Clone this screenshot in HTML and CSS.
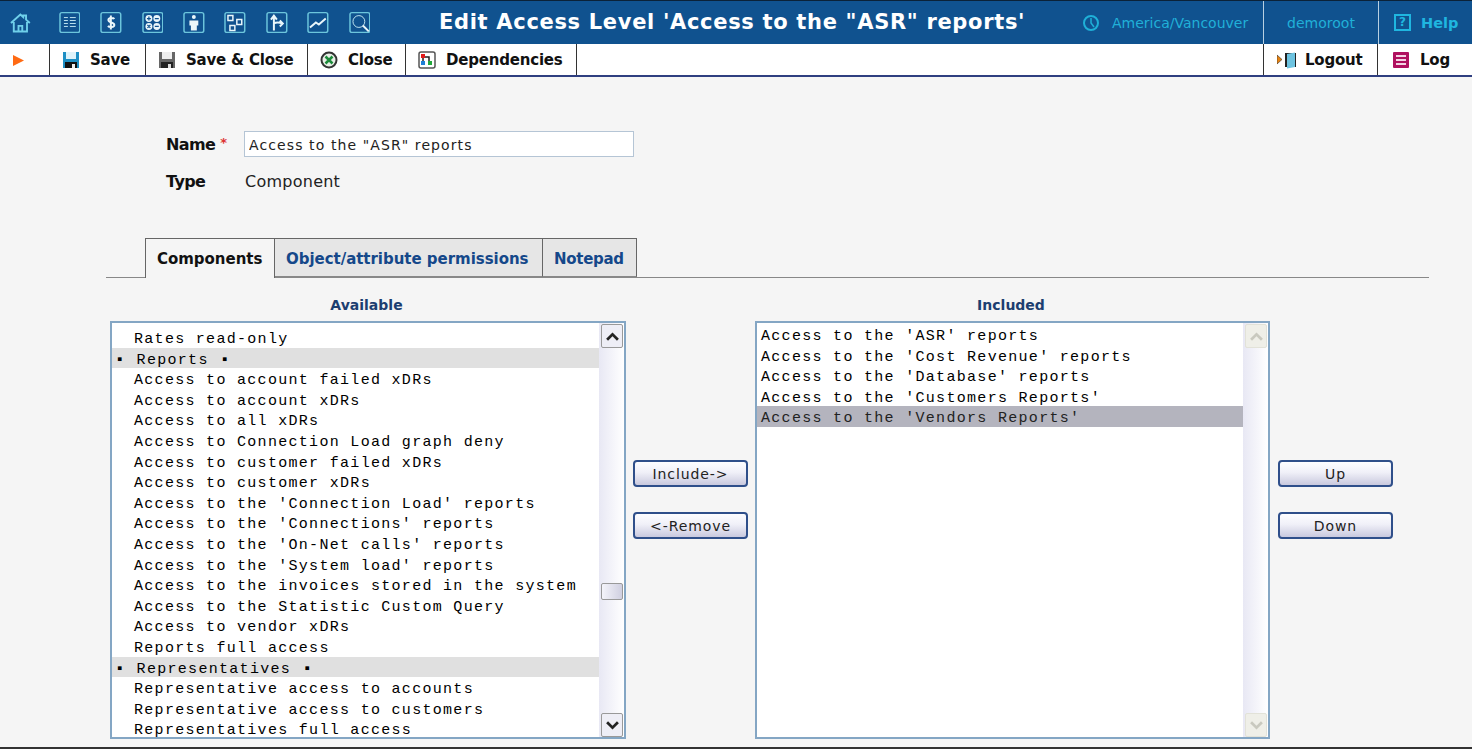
FILE: index.html
```html
<!DOCTYPE html>
<html lang="en">
<head>
<meta charset="utf-8">
<title>Edit Access Level</title>
<link rel="stylesheet" href="styles.css">
</head>
<body>
<div class="page">
<header class="topbar">
  <nav class="nav-icons">
    <svg class="home" viewBox="0 0 22 22"><path d="M1 11 11 2l3 2.700V3h3v4.400l4 3.600M4 10v10h14V10M9 20v-6h4v6" fill="none" stroke="#6fd0ea" stroke-width="2"/></svg>
    <svg class="nav" viewBox="0 0 22 22"><rect x="1" y="1" width="20" height="20" rx="2"/><path d="M5 6h4M5 9h4M5 12h4M5 15h4M11 6h6M11 9h6M11 12h6M11 15h6" class="thin"/></svg>
    <svg class="nav" viewBox="0 0 22 22"><rect x="1" y="1" width="20" height="20" rx="2"/><path d="M14.500 7.500c-1-1.500-6-1.500-6 1 0 3 6 2 6 5 0 2.500-5 2.500-6.500 1M11 4v14" class="white"/></svg>
    <svg class="nav" viewBox="0 0 22 22"><rect x="1" y="1" width="20" height="20" rx="2"/><circle cx="7" cy="7" r="3.500" class="fill"/><circle cx="15" cy="7" r="3.500" class="fill"/><circle cx="7" cy="15" r="3.500" class="fill"/><circle cx="15" cy="15" r="3.500" class="fill"/><path d="M5 7h4M7 5v4M13 7h4M5.500 13.500l3 3M8.500 13.500l-3 3M13 15h4" class="mark"/></svg>
    <svg class="nav" viewBox="0 0 22 22"><rect x="1" y="1" width="20" height="20" rx="2"/><circle cx="11" cy="5.500" r="2" class="fill"/><path d="M6.500 9h9v5H14v5H8v-5H6.500z" class="fill"/></svg>
    <svg class="nav" viewBox="0 0 22 22"><rect x="1" y="1" width="20" height="20" rx="2"/><path d="M4 4h5v5H4zM13 8h5v5h-5zM6 14h5v5H6z" class="white-thin"/></svg>
    <svg class="nav" viewBox="0 0 22 22"><rect x="1" y="1" width="20" height="20" rx="2"/><path d="M8 19V5M5 8l3-4 3 4M8 12c3-2 6-1 9 0M14 9l3 3-3 3" class="white"/></svg>
    <svg class="nav" viewBox="0 0 22 22"><rect x="1" y="1" width="20" height="20" rx="2"/><path d="M3 16l6-5 3 2 7-6" class="white"/></svg>
    <svg class="nav" viewBox="0 0 22 22"><rect x="1" y="1" width="20" height="20" rx="2"/><circle cx="10" cy="10" r="6" class="thin"/><path d="M14 14l6 6" class="white"/></svg>
  </nav>
  <h1 class="title">Edit Access Level 'Access to the "ASR" reports'</h1>
  <div class="zone">
    <svg class="clock" viewBox="0 0 18 18"><circle cx="9" cy="9" r="7" fill="none" stroke="#1fb0d8" stroke-width="2"/><path d="M9 4v5l3 4" fill="none" stroke="#1fb0d8" stroke-width="1.500"/></svg>
    <span>America/Vancouver</span>
  </div>
  <div class="user">demoroot</div>
  <div class="help">
    <span class="help-box">?</span>
    <span class="help-text">Help</span>
  </div>
</header>

<div class="toolbar">
  <div class="tool arrow-cell"><svg class="arrow" viewBox="0 0 11 11"><path d="M0 0l11 5.500L0 11z" fill="#ff6a13"/></svg></div>
  <div class="tool t-save">
    <svg class="ticon" viewBox="0 0 18 18"><path d="M1 1h16v16H1z" fill="#1e8fc4"/><path d="M4 1h10v7H4z" fill="#dff3fa"/><path d="M3 11h12v6H3z" fill="#111"/><path d="M10 13h3v4h-3z" fill="#eee"/></svg>
    <span>Save</span>
  </div>
  <div class="tool t-saveclose">
    <svg class="ticon" viewBox="0 0 18 18"><path d="M1 1h16v16H1z" fill="#666"/><path d="M4 1h10v7H4z" fill="#eee"/><path d="M3 11h12v6H3z" fill="#222"/><path d="M10 13h3v4h-3z" fill="#ddd"/></svg>
    <span>Save &amp; Close</span>
  </div>
  <div class="tool t-close">
    <svg class="ticon" viewBox="0 0 18 18"><circle cx="9" cy="9" r="7.500" fill="#e8efe6" stroke="#333" stroke-width="2"/><path d="M5.500 5.500l7 7M12.500 5.500l-7 7" stroke="#1c8a3a" stroke-width="2.500"/></svg>
    <span>Close</span>
  </div>
  <div class="tool t-dep">
    <svg class="ticon" viewBox="0 0 18 18"><rect x="1" y="1" width="16" height="16" rx="2" fill="#fff" stroke="#555" stroke-width="1.500"/><path d="M5 6v7M5 6h6v6" fill="none" stroke="#222" stroke-width="1.500"/><rect x="3" y="3" width="4" height="4" fill="#e21b1b"/><rect x="3" y="10" width="4" height="4" fill="#1f7fd6"/><rect x="10" y="10" width="4" height="4" fill="#22a83c"/></svg>
    <span>Dependencies</span>
  </div>
  <div class="tool-spacer"></div>
  <div class="tool t-logout">
    <svg class="ticon" viewBox="0 0 22 18"><path d="M0 4l5 4.500L0 13z" fill="#e8820e" stroke="#333" stroke-width=".6"/><path d="M8 2h11v14H8z" fill="#222"/><path d="M10 3l8-1.500V16l-8 1.500z" fill="#6dc3e0"/></svg>
    <span>Logout</span>
  </div>
  <div class="tool t-log">
    <svg class="ticon" viewBox="0 0 18 18"><rect x="1" y="1" width="16" height="16" rx="1" fill="#b0105f"/><path d="M4 5h10M4 9h10M4 13h10" stroke="#f4d3e3" stroke-width="2"/></svg>
    <span>Log</span>
  </div>
</div>
<div class="toolbar-rule"></div>

<main class="main">
  <div class="form">
    <label class="f-label">Name <span class="req">*</span></label>
    <input class="f-input" type="text" value="Access to the &quot;ASR&quot; reports">
    <div class="f-label">Type</div>
    <div class="f-value">Component</div>
  </div>

  <div class="tabs">
    <div class="tab active">Components</div>
    <div class="tab">Object/attribute permissions</div>
    <div class="tab">Notepad</div>
  </div>

  <div class="picker">
    <div class="heading">Available</div>
    <div></div>
    <div class="heading">Included</div>
    <div></div>

    <div class="listbox">
      <div class="items avail">
        <div class="item">Rates read-only</div>
        <div class="item group">&#9642; Reports &#9642;</div>
        <div class="item">Access to account failed xDRs</div>
        <div class="item">Access to account xDRs</div>
        <div class="item">Access to all xDRs</div>
        <div class="item">Access to Connection Load graph deny</div>
        <div class="item">Access to customer failed xDRs</div>
        <div class="item">Access to customer xDRs</div>
        <div class="item">Access to the 'Connection Load' reports</div>
        <div class="item">Access to the 'Connections' reports</div>
        <div class="item">Access to the 'On-Net calls' reports</div>
        <div class="item">Access to the 'System load' reports</div>
        <div class="item">Access to the invoices stored in the system</div>
        <div class="item">Access to the Statistic Custom Query</div>
        <div class="item">Access to vendor xDRs</div>
        <div class="item">Reports full access</div>
        <div class="item group">&#9642; Representatives &#9642;</div>
        <div class="item">Representative access to accounts</div>
        <div class="item">Representative access to customers</div>
        <div class="item">Representatives full access</div>
      </div>
      <div class="scrollbar">
        <div class="sb-btn"><svg viewBox="0 0 12 8"><path d="M1 7l5-5 5 5" fill="none" stroke="#222" stroke-width="2.500"/></svg></div>
        <div class="sb-track"><div class="sb-thumb"></div></div>
        <div class="sb-btn"><svg viewBox="0 0 12 8"><path d="M1 1l5 5 5-5" fill="none" stroke="#222" stroke-width="2.500"/></svg></div>
      </div>
    </div>

    <div class="btn-col">
      <button class="btn">Include-&gt;</button>
      <button class="btn">&lt;-Remove</button>
    </div>

    <div class="listbox">
      <div class="items incl">
        <div class="item">Access to the 'ASR' reports</div>
        <div class="item">Access to the 'Cost Revenue' reports</div>
        <div class="item">Access to the 'Database' reports</div>
        <div class="item">Access to the 'Customers Reports'</div>
        <div class="item selected">Access to the 'Vendors Reports'</div>
      </div>
      <div class="scrollbar disabled">
        <div class="sb-btn"><svg viewBox="0 0 12 8"><path d="M1 7l5-5 5 5" fill="none" stroke="#c9c9bf" stroke-width="2.500"/></svg></div>
        <div class="sb-track"></div>
        <div class="sb-btn"><svg viewBox="0 0 12 8"><path d="M1 1l5 5 5-5" fill="none" stroke="#c9c9bf" stroke-width="2.500"/></svg></div>
      </div>
    </div>

    <div class="btn-col last">
      <button class="btn">Up</button>
      <button class="btn">Down</button>
    </div>
  </div>
</main>
<div class="bottom-rule"></div>
</div>
</body>
</html>
```

FILE: styles.css
```css
* { box-sizing: border-box; }
html, body { margin: 0; padding: 0; height: 100%; overflow: hidden; }
body { font-family: "DejaVu Sans", sans-serif; background: #f5f5f5; color: #111; }
.page { height: 749px; display: flex; flex-direction: column; }

.topbar {
  height: 44px; flex: none; display: flex; align-items: stretch;
  background: #10528f; border-top: 1px solid #0b2238;
}
.nav-icons { display: flex; align-items: center; width: 390px; padding-left: 10px; flex: none; }
.home { width: 22px; height: 22px; margin-right: 28px; }
.nav { width: 23px; height: 23px; margin-right: 19.700px; fill: none; stroke: #6cc5dc; stroke-width: 1.500; }
.nav .thin { stroke: #bfe4f0; stroke-width: 1; fill: none; }
.nav .white { stroke: #eaf6fa; stroke-width: 2; fill: none; }
.nav .white-thin { stroke: #eaf6fa; stroke-width: 1.500; fill: none; }
.nav .fill { stroke: none; fill: #eaf6fa; }
.nav .mark { stroke: #10528f; stroke-width: 1.200; fill: none; }

.title {
  flex: none; width: 692px; margin: 0; padding-left: 49px;
  font-size: 21px; font-weight: 700; line-height: 43px; color: #fff;
  letter-spacing: .68px; white-space: nowrap;
}
.zone {
  flex: 1; display: flex; align-items: center; gap: 12px;
  font-size: 14px; color: #20b0d8;
}
.clock { width: 18px; height: 18px; flex: none; }
.user {
  width: 115px; flex: none; border-left: 1px solid #b8d0e2;
  display: flex; align-items: center; justify-content: center;
  font-size: 14px; color: #20b0d8;
}
.help {
  width: 94px; flex: none; border-left: 1px solid #b8d0e2;
  display: flex; align-items: center; gap: 10px; padding-left: 15px;
}
.help-box {
  width: 17px; height: 17px; border: 2px solid #1fb6e0; color: #1fb6e0;
  font-size: 12px; font-weight: 700; line-height: 13px; text-align: center;
}
.help-text { font-size: 14.500px; font-weight: 700; color: #1fb6e0; }

.toolbar {
  height: 31px; flex: none; display: flex; background: #fff;
  font-size: 15px; letter-spacing: -.2px; font-weight: 700; color: #111;
}
.tool { display: flex; align-items: center; gap: 10px; border-right: 1px solid #333; flex: none; padding-top: 1px; }
.tool-spacer { flex: 1; border-right: 1px solid #333; }
.arrow-cell { width: 50px; padding-left: 13px; }
.arrow { width: 11px; height: 11px; }
.ticon { width: 18px; height: 18px; flex: none; }
.t-save { width: 96px; padding-left: 12px; }
.t-saveclose { width: 162px; padding-left: 12px; }
.t-close { width: 98px; padding-left: 12px; }
.t-dep { width: 171px; padding-left: 12px; }
.t-logout { width: 114px; padding-left: 13px; gap: 6px; }
.t-logout .ticon { width: 22px; }
.t-log { width: 94px; padding-left: 14px; border-right: none; }
.toolbar-rule { height: 2px; flex: none; background: #2f3f80; }

.main { flex: 1; min-height: 0; padding: 54px 43px 0 106px; }

.form {
  display: grid; grid-template-columns: 78px 390px; row-gap: 11px;
  margin-left: 60px; align-items: center;
}
.f-label { font-size: 16px; font-weight: 700; color: #111; letter-spacing: -.6px; }
.req { color: #d33; font-size: 13px; vertical-align: 3px; }
.f-input {
  height: 26px; border: 1px solid #b5c5d5; background: #fff; padding: 2px 4px 0;
  font-family: "DejaVu Sans", sans-serif; font-size: 14px; color: #222; letter-spacing: 1.100px;
  outline: none;
}
.f-value { font-size: 16px; color: #222; height: 26px; line-height: 28px; padding-left: 1px; letter-spacing: .25px; }

.tabs {
  display: flex; margin-top: 44px; padding-left: 39px; height: 40px;
  border-bottom: 1px solid #888; font-size: 15px; letter-spacing: -.03px; font-weight: 700;
}
.tab {
  height: 39px; padding-top: 11px; background: #e6e6e6; color: #15488a;
  border: 1px solid #666; border-left: none; border-bottom: 1px solid #888;
  width: 268px; padding-left: 11px; white-space: nowrap;
}
.tab.active {
  background: #f5f5f5; color: #111; border-left: 1px solid #666; border-bottom: none;
  height: 40px; width: 130px;
}
.tab:last-child { width: 94px; letter-spacing: -.3px; }

.picker {
  display: grid; margin-left: 4px; margin-top: 19px;
  grid-template-columns: 516px 115px 515px 115px; column-gap: 7px;
  grid-template-rows: 17px 418px; row-gap: 7px;
}
.heading { text-align: center; font-size: 14px; font-weight: 700; color: #1c3e70; line-height: 17px; padding-right: 3px; }

.listbox {
  border: 2px solid #84a6c4; background: #fff;
  display: flex;
}
.items {
  flex: 1; min-width: 0;
  font-family: "Liberation Mono", monospace; font-size: 15px; letter-spacing: 1.300px; color: #000;
}
.avail { padding-top: 4px; }
.incl { padding-top: 1px; }
.item { height: 20.600px; line-height: 26px; padding-left: 22px; white-space: nowrap; }
.incl .item { padding-left: 4px; }
.group { background: #e0e0e0; padding-left: 3px; word-spacing: 1px; }
.selected { background: #b4b4be; color: #222; }

.scrollbar {
  width: 25px; flex: none; display: flex; flex-direction: column; padding: 1px 1px 0 2px;
  background: linear-gradient(to right, #e8e8f4, #fff);
}
.sb-btn {
  height: 24px; flex: none; border: 1px solid #999; border-radius: 2px; background: #eeeef6;
  display: flex; align-items: center; justify-content: center;
}
.sb-btn svg { width: 13px; height: 9px; }
.sb-track { flex: 1; position: relative; }
.sb-thumb {
  position: absolute; left: 0; right: 0; top: 235px; height: 17px;
  border: 1px solid #999; border-radius: 2px;
  background: linear-gradient(to right, #f4f4fa, #cfcfe0);
}
.disabled .sb-btn { background: #efefe8; border-color: #e2e2d8; }

.btn-col { display: flex; flex-direction: column; gap: 25px; padding-top: 139px; }
.btn-col.last { margin-left: 1px; }
.btn {
  height: 27px; width: 115px; padding: 0; border: 2px solid #2f4f8a; border-radius: 4px;
  background: linear-gradient(to bottom, #fdfdff, #f0f0f8 45%, #c9c9de);
  font-family: "DejaVu Sans", sans-serif; font-size: 14px; color: #222; letter-spacing: .9px;
}
.bottom-rule { height: 2px; flex: none; background: #333; }
```
